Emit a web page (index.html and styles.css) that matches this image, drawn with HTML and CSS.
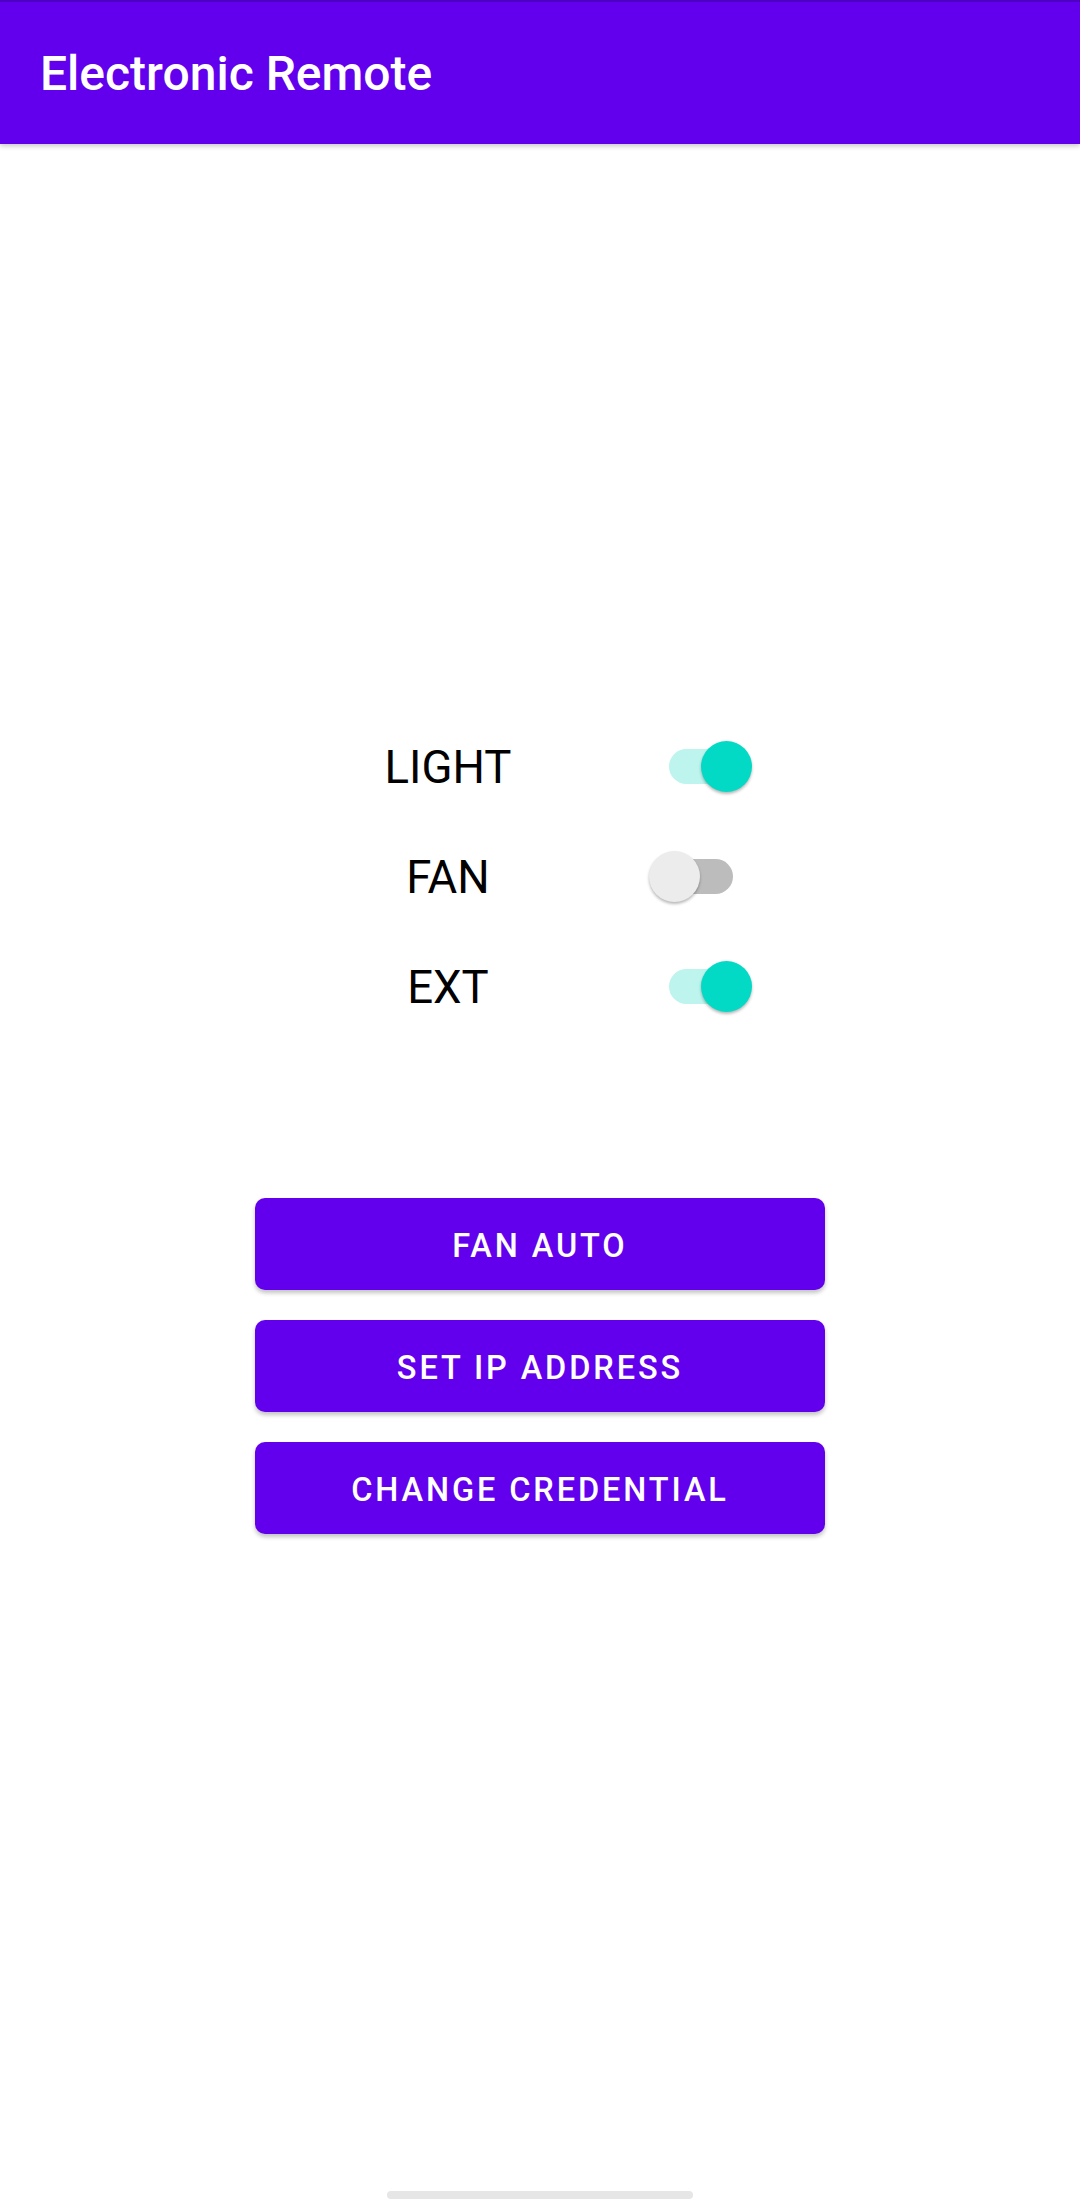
FILE: index.html
```html
<!DOCTYPE html>
<html>
<head>
<meta charset="utf-8">
<link rel="stylesheet" href="styles.css">
</head>
<body>
<div class="screen">
  <header class="appbar"><span class="title">Electronic Remote</span></header>
  <main class="content">
    <div class="toggles">
      <div class="label">LIGHT</div>
      <div class="switch on"><span class="track"></span><span class="thumb"></span></div>
      <div class="label">FAN</div>
      <div class="switch"><span class="track"></span><span class="thumb"></span></div>
      <div class="label">EXT</div>
      <div class="switch on"><span class="track"></span><span class="thumb"></span></div>
    </div>
    <div class="buttons">
      <button class="btn">FAN AUTO</button>
      <button class="btn">SET IP ADDRESS</button>
      <button class="btn">CHANGE CREDENTIAL</button>
    </div>
  </main>
  <div class="navhandle"></div>
</div>
</body>
</html>
```
FILE: styles.css
```css
* { box-sizing: border-box; }
html, body { margin: 0; padding: 0; background: #fff; }
body { font-family: Roboto, "Noto Sans", sans-serif; }
.screen { position: relative; width: 1080px; height: 2199px; overflow: hidden; background: #fff; }
.appbar {
  height: 144px;
  background: #6200ee;
  border-top: 2px solid #4d00c4;
  display: flex;
  align-items: center;
  padding-left: 40px;
  box-shadow: 0 2px 5px rgba(0,0,0,0.22);
  position: relative;
  z-index: 1;
}
.title { color: #fff; font-size: 48px; font-weight: 500; line-height: 1; padding-top: 2px; }
.content { display: flex; flex-direction: column; }
.toggles {
  margin-top: 567px;
  margin-left: 328px;
  padding-left: 20px;
  width: 424px;
  display: grid;
  grid-template-columns: 200px 103px;
  column-gap: 101px;
  grid-auto-rows: 110px;
  align-items: center;
}
.label { text-align: center; font-size: 45.5px; line-height: 1; color: #000; padding-top: 4px; }
.switch { position: relative; width: 103px; height: 51px; }
.track {
  position: absolute; left: 20px; top: 8px; width: 64px; height: 35px;
  border-radius: 18px; background: #bcbcbc;
}
.thumb {
  position: absolute; left: 0; top: 0; width: 51px; height: 51px; border-radius: 50%;
  background: #ececec;
  box-shadow: 0 2px 3px rgba(0,0,0,0.28);
}
.switch.on .track { background: #bdf4ee; }
.switch.on .thumb { left: 52px; background: #03dac5; }
.buttons {
  margin: 157px auto 0;
  width: 570px;
  display: flex;
  flex-direction: column;
  gap: 30px;
}
.btn {
  height: 92px;
  border: none;
  border-radius: 10px;
  background: #6200ee;
  color: #fff;
  font-family: Roboto, "Noto Sans", sans-serif;
  font-size: 32.5px;
  font-weight: 500;
  letter-spacing: 2.9px;
  box-shadow: 0 3px 4px rgba(0,0,0,0.24);
  padding: 3px 0 0;
}
.navhandle {
  position: absolute; left: 387px; top: 2191px; width: 306px; height: 8px;
  border-radius: 4px; background: #e6e6e6;
}
```
